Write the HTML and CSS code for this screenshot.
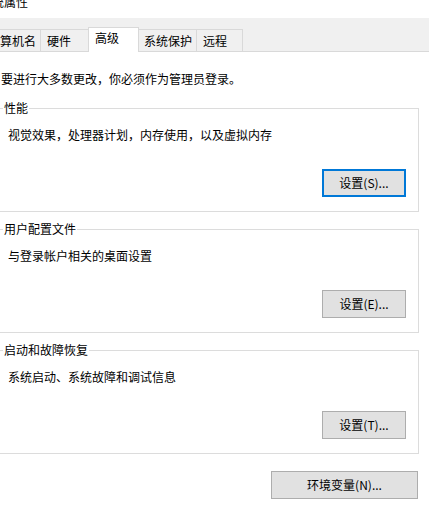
FILE: index.html
```html
<!DOCTYPE html>
<html lang="zh-CN">
<head>
    <meta charset="UTF-8">
    <meta name="viewport" content="width=device-width, initial-scale=1.0">
    <title>系统属性</title>
    <link rel="stylesheet" href="styles.css">
</head>
<body>

    <div class="titlebar">
        <span class="title">系统属性</span>
    </div>

    <div class="tabs">
        <div class="tab">计算机名</div>
        <div class="tab">硬件</div>
        <div class="tab active">高级</div>
        <div class="tab">系统保护</div>
        <div class="tab">远程</div>
    </div>

    <div class="content">
        <div class="notice">要进行大多数更改，你必须作为管理员登录。</div>

        <div class="group">
            <span class="group-title">性能</span>
            <div class="desc">视觉效果，处理器计划，内存使用，以及虚拟内存</div>
            <div class="actions">
                <button class="btn focused">设置(S)...</button>
            </div>
        </div>

        <div class="group">
            <span class="group-title">用户配置文件</span>
            <div class="desc">与登录帐户相关的桌面设置</div>
            <div class="actions">
                <button class="btn">设置(E)...</button>
            </div>
        </div>

        <div class="group">
            <span class="group-title">启动和故障恢复</span>
            <div class="desc">系统启动、系统故障和调试信息</div>
            <div class="actions">
                <button class="btn">设置(T)...</button>
            </div>
        </div>

        <div class="actions bottom">
            <button class="btn wide">环境变量(N)...</button>
        </div>
    </div>

</body>
</html>
```

FILE: styles.css
```css
body {
    margin: 0;
    background: #fff;
    color: #000;
    font-family: "Noto Sans CJK SC", "Noto Sans", sans-serif;
    font-size: 12px;
    line-height: 16px;
    overflow: hidden;
}

.titlebar {
    height: 18px;
    overflow: hidden;
    background: #fff;
}
.title {
    display: block;
    margin: -6px 0 0 -20px;
    line-height: 16px;
}

.tabs {
    display: flex;
    align-items: flex-end;
    height: 33px;
    background: #f0f0f0;
    border-bottom: 1px solid #d9d9d9;
}
.tab {
    box-sizing: border-box;
    height: 22px;
    padding: 1px 0 0 6px;
    margin-right: -1px;
    line-height: 20px;
    border: 1px solid #d9d9d9;
    border-bottom: none;
    background: #f0f0f0;
    white-space: nowrap;
}
.tab:nth-child(1) { width: 59px; margin-left: -18px; padding-left: 5px; }
.tab:nth-child(2) { width: 49px; }
.tab:nth-child(3) { width: 51px; }
.tab:nth-child(4) { width: 59px; padding-left: 5px; }
.tab:nth-child(5) { width: 47px; }
.tab.active {
    position: relative;
    z-index: 1;
    height: 25px;
    margin-bottom: -1px;
    padding-top: 0;
    background: #fff;
}

.content {
    width: 419px;
    padding-top: 19px;
}
.notice {
    padding-left: 1px;
    margin-bottom: 21px;
}

.group {
    position: relative;
    margin: 0 0 17px -3px;
    padding: 18px 12px 14px 10px;
    border: 1px solid #dcdcdc;
}
.group-title {
    position: absolute;
    top: -9px;
    left: 5px;
    padding: 0 1px;
    background: #fff;
}
.desc {
    height: 16px;
}
.actions {
    display: flex;
    justify-content: flex-end;
    margin-top: 26px;
}
.actions.bottom {
    margin-top: 0;
    padding-right: 1px;
}

.btn {
    box-sizing: border-box;
    width: 84px;
    height: 28px;
    padding: 0;
    font: inherit;
    color: #000;
    background: #e1e1e1;
    border: 1px solid #adadad;
}
.btn.focused {
    border: 2px solid #0078d7;
}
.btn.wide {
    width: 147px;
}
```
